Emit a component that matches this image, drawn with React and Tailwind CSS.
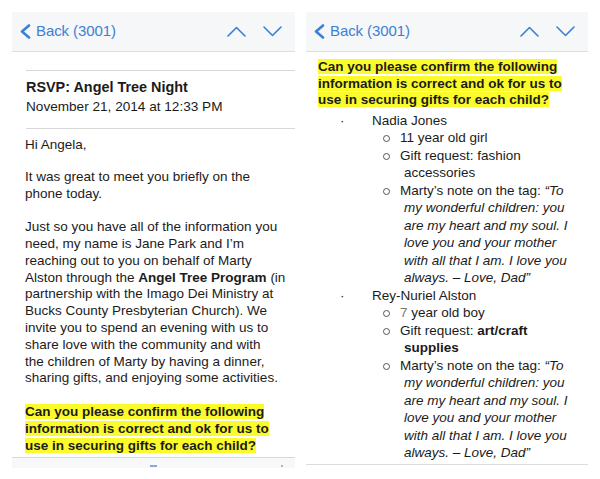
import React from "react"

/* ================= NAV BAR ================= */
function NavBar() {
  return (
    <div className="h-[40px] shrink-0 bg-[#f6f7f9] border-b border-[#dcdee2] flex items-center pl-[7px] pr-[13px]">
      <svg width="12" height="15" viewBox="0 0 12 15" className="shrink-0">
        <path d="M10 1.5 L3 7.5 L10 13.5" fill="none" stroke="#3b80d5" strokeWidth="2.6" strokeLinecap="round" strokeLinejoin="round" />
      </svg>
      <span className="ml-[5px] text-[15px] text-[#3b80d5] tracking-[-0.1px]">Back (3001)</span>
      <div className="ml-auto flex items-center gap-[17px]">
        <svg width="19" height="11" viewBox="0 0 19 11">
          <path d="M1 10 L9.5 1.5 L18 10" fill="none" stroke="#3b80d5" strokeWidth="1.6" strokeLinecap="round" strokeLinejoin="round" />
        </svg>
        <svg width="19" height="11" viewBox="0 0 19 11">
          <path d="M1 1 L9.5 9.5 L18 1" fill="none" stroke="#3b80d5" strokeWidth="1.6" strokeLinecap="round" strokeLinejoin="round" />
        </svg>
      </div>
    </div>
  )
}

function Hl({ children }) {
  return <span className="bg-[#fbfb2c] box-decoration-clone font-bold">{children}</span>
}

function Sub({ children }) {
  return (
    <div className="flex">
      <div className="w-[94px] shrink-0 flex justify-end pr-[10px] pt-[6px]">
        <div className="w-[7px] h-[7px] rounded-full border border-[#555]" />
      </div>
      <div className="whitespace-nowrap pl-[4px] -indent-[4px]">{children}</div>
    </div>
  )
}

function Child({ name }) {
  return (
    <div className="flex whitespace-nowrap">
      <div className="w-[66px] shrink-0 pl-[34px]">·</div>
      <div>{name}</div>
    </div>
  )
}

const note = (
  <>
    Marty’s note on the tag: <i>“To<br />my wonderful children: you<br />are my heart and my soul. I<br />love you and your mother<br />with all that I am. I love you<br />always. – Love, Dad”</i>
  </>
)

export default function App() {
  return (
    <div className="w-[600px] h-[479px] bg-white flex gap-[11px] pl-[12px] pt-[12px] overflow-hidden text-[#1b1b1b]" style={{ fontFamily: '"Liberation Sans", Arial, sans-serif' }}>

      {/* ================= LEFT SCREEN ================= */}
      <div className="w-[283px] h-[456px] flex flex-col">
        <NavBar />
        <div className="flex-1 overflow-hidden">
          <div className="h-[18px]" />
          <div className="ml-[14px] border-t border-[#d8d8d8]" />
          <div className="pl-[14px] pt-[6px]">
            <div className="text-[14.4px] font-bold leading-[20px]">RSVP: Angel Tree Night</div>
            <div className="text-[13.6px] leading-[20px]">November 21, 2014 at 12:33 PM</div>
          </div>
          <div className="ml-[14px] mt-[11px] border-t border-[#d8d8d8]" />
          <div className="pl-[13px] pt-[8px] text-[13.5px] leading-[16.8px] whitespace-nowrap">
            <p>Hi Angela,</p>
            <p className="mt-[15px]">It was great to meet you briefly on the<br />phone today.</p>
            <p className="mt-[16.8px]">
              Just so you have all of the information you<br />
              need, my name is Jane Park and I’m<br />
              reaching out to you on behalf of Marty<br />
              Alston through the <b>Angel Tree Program</b> (in<br />
              partnership with the Imago Dei Ministry at<br />
              Bucks County Presbyterian Church). We<br />
              invite you to spend an evening with us to<br />
              share love with the community and with<br />
              the children of Marty by having a dinner,<br />
              sharing gifts, and enjoying some activities.
            </p>
            <p className="mt-[16.8px]">
              <Hl>Can you please confirm the following<br />information is correct and ok for us to<br />use in securing gifts for each child?</Hl>
            </p>
          </div>
        </div>
        <div className="h-[11px] shrink-0 border-t border-[#d6d8dc] bg-[#f7f8fa] flex items-end pb-[1px]">
          <div className="ml-[138px] w-[7px] h-[2px] bg-[#8aa9d6]" />
          <div className="ml-auto mr-[12px] w-[2px] h-[2px] bg-[#b5b5b5]" />
        </div>
      </div>

      {/* ================= RIGHT SCREEN ================= */}
      <div className="w-[282px] h-[459px] flex flex-col">
        <NavBar />
        <div className="flex-1 overflow-hidden text-[13.5px]">
          <div className="pl-[12px] pt-[7px] leading-[16.5px] whitespace-nowrap">
            <Hl>Can you please confirm the following<br />information is correct and ok for us to<br />use in securing gifts for each child?</Hl>
          </div>
          <div className="mt-[3px] leading-[17.5px]">
            <Child name="Nadia Jones" />
            <Sub>11 year old girl</Sub>
            <Sub>Gift request: fashion<br />accessories</Sub>
            <Sub>{note}</Sub>
            <Child name="Rey-Nuriel Alston" />
            <Sub><span className="text-[#777]">7</span> year old boy</Sub>
            <Sub>Gift request: <b>art/craft<br />supplies</b></Sub>
            <Sub>{note}</Sub>
          </div>
        </div>
        <div className="h-[7px] shrink-0 border-t border-[#dcdcdc]" />
      </div>

    </div>
  )
}
